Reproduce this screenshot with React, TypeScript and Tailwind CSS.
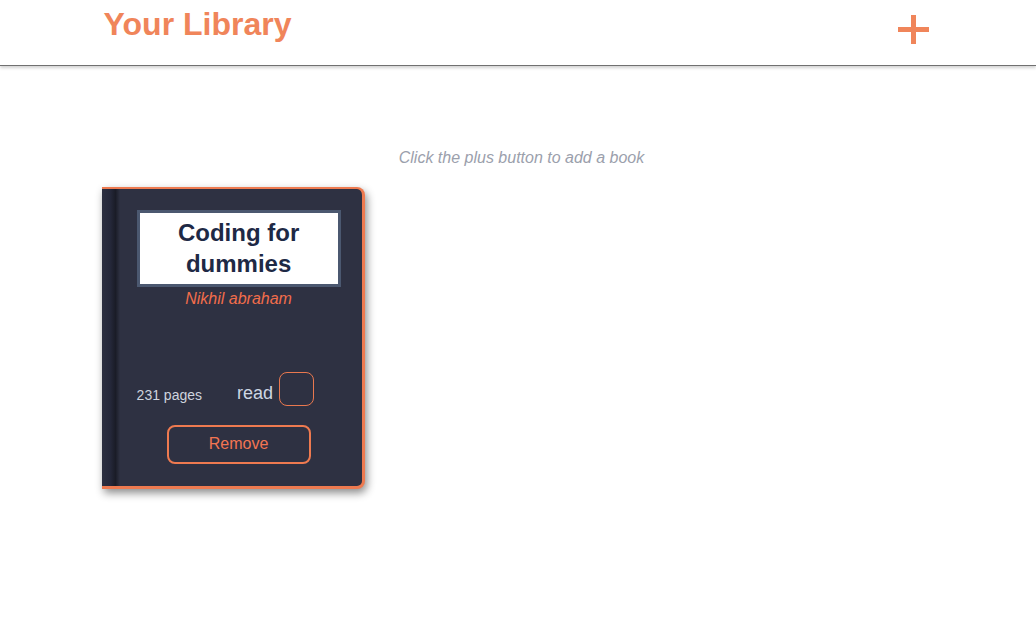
const books = [
  { title: "Coding for dummies", author: "Nikhil abraham", pages: 231, read: false },
];

const PlusIcon = () => (
  <svg width="31" height="29" viewBox="0 0 31 29" fill="#f0855a">
    <rect x="0" y="12" width="31" height="5" />
    <rect x="13" y="0" width="5" height="29" />
  </svg>
);

interface BookProps {
  title: string;
  author: string;
  pages: number;
  read: boolean;
}

const BookCard = ({ title, author, pages }: BookProps) => {
  return (
    <div className="-ml-[2px] flex w-[263px] rounded-r-lg border-[3px] border-l-0 border-t-2 border-[#ee7a50] bg-[#2e3142] shadow-[2px_4px_8px_rgba(0,0,0,0.45)]">
      <div className="w-[18px] shrink-0 bg-[linear-gradient(to_right,#2c2f40_0%,#25283a_45%,#1a1c27_75%,#2e3142_100%)]" />
      <div className="flex flex-1 flex-col pt-[21px] pb-[22px]">
        <div className="ml-[17px] w-[204px] border-[3px] border-[#4b5870] bg-white pt-[4px] pb-[5px] text-center text-[24px] font-bold leading-[31px] text-[#1e2945]">
          {title}
        </div>
        <p className="mt-[3px] ml-[17px] w-[204px] text-center text-[16px] italic text-[#f26d4b]">
          {author}
        </p>
        <div className="mt-[64px] ml-[17px] flex items-end">
          <span className="mb-[3px] text-[14px] text-[#cfd4de]">{pages} pages</span>
          <span className="mb-[2px] ml-[35px] text-[18px] text-[#cdd6e3]">read</span>
          <button className="ml-[6px] h-[34px] w-[35px] rounded-lg border border-[#e9784f]" />
        </div>
        <button className="mt-[19px] ml-[47px] h-[39px] w-[144px] rounded-lg border-2 border-[#ee7a50] pb-[2px] text-[16px] text-[#f37552]">
          Remove
        </button>
      </div>
    </div>
  );
};

export default function App() {
  return (
    <div className="min-h-screen bg-white font-['Liberation_Sans',Arial,sans-serif] leading-[normal]">
      <header className="flex h-[66px] items-start justify-between border-b border-[#707070] px-[10%] shadow-[0_2px_3px_rgba(0,0,0,0.18)]">
        <h1 className="pt-[6px] text-[32px] font-bold text-[#f0855a]">Your Library</h1>
        <button className="mt-[15px] mr-[3px]">
          <PlusIcon />
        </button>
      </header>
      <main className="px-[10%] pt-[83px]">
        <p className="pl-[7px] text-center text-[16px] italic text-[#9ba0ac]">
          Click the plus button to add a book
        </p>
        <div className="mt-[20px] flex flex-wrap gap-6">
          {books.map((b) => (
            <BookCard key={b.title} {...b} />
          ))}
        </div>
      </main>
    </div>
  );
}
